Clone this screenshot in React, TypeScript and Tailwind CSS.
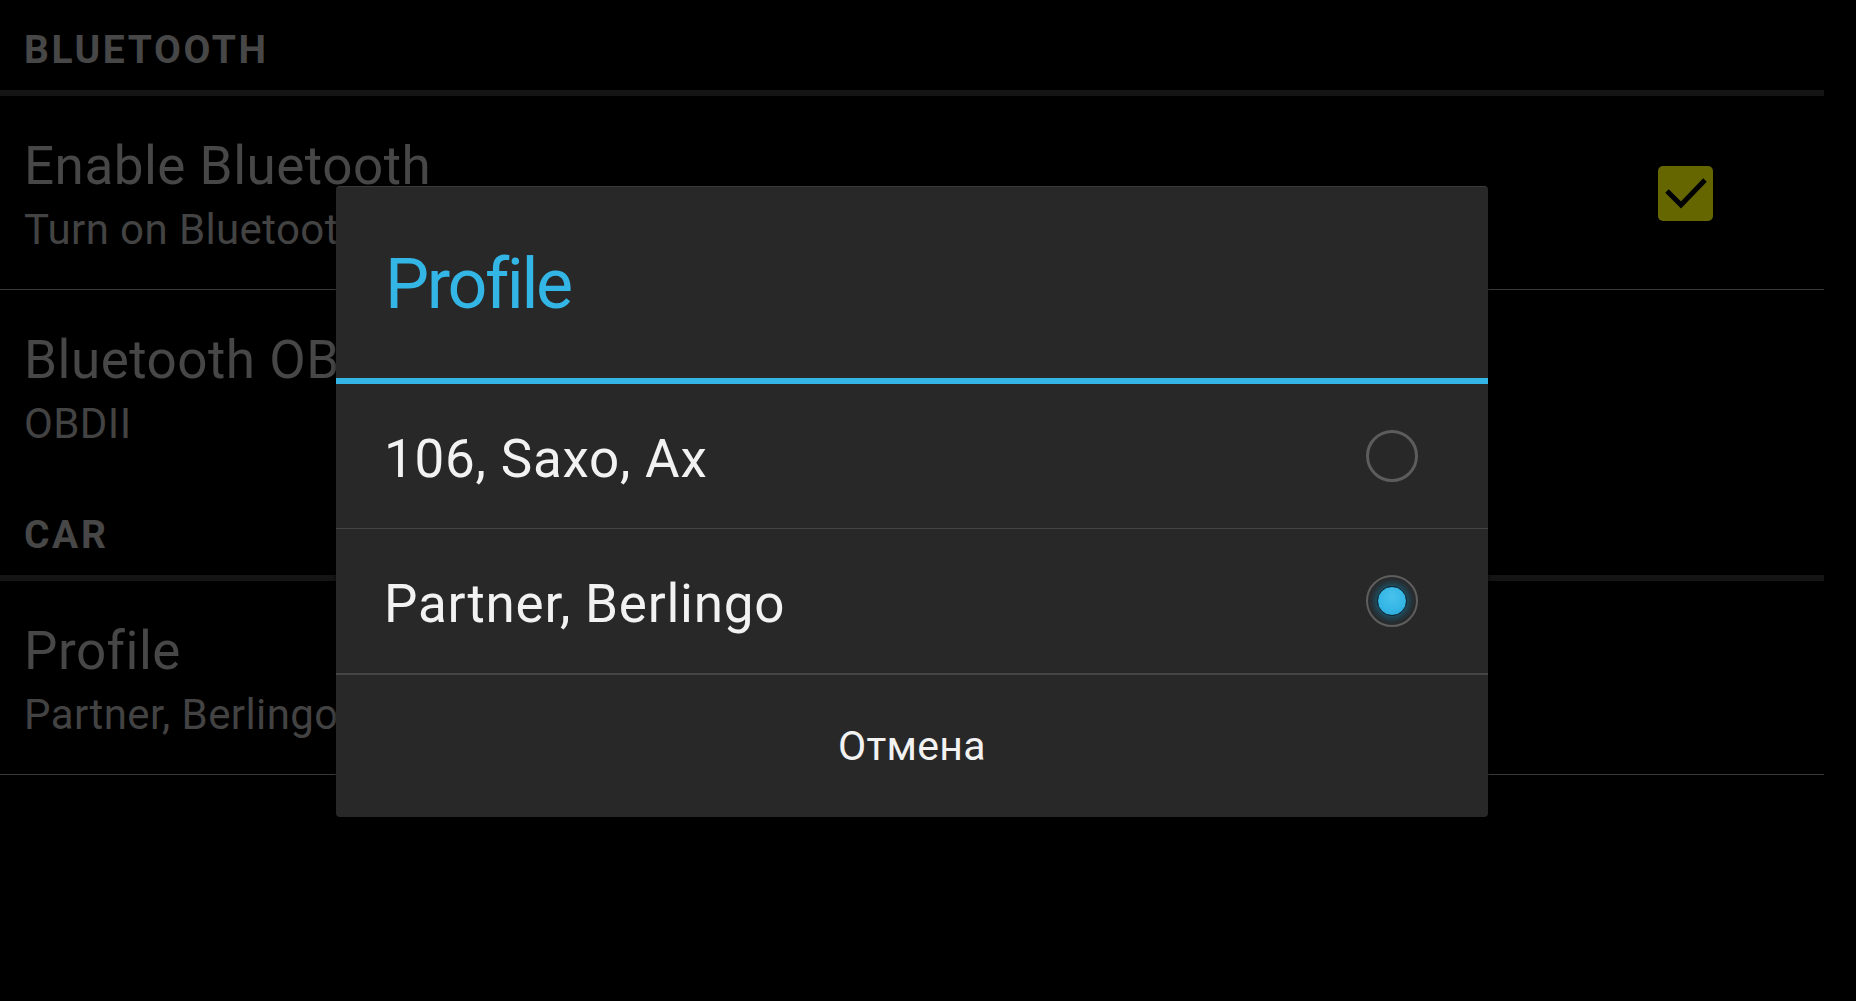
import React from 'react';

const font = { fontFamily: 'Roboto, "Noto Sans", sans-serif' };

function Header({ label }: { label: string }) {
  return (
    <div>
      <div className="pl-[24px] pt-[31px] pb-[20px] text-[39px] leading-[39px] font-bold tracking-[2.6px] text-[#474747]">
        {label}
      </div>
      <div className="h-[6px] bg-[#151515]" />
    </div>
  );
}

function PrefRow({
  title,
  summary,
  checked,
  divider = true,
  bottom = 38,
}: {
  title: string;
  summary: string;
  checked?: boolean;
  divider?: boolean;
  bottom?: number;
}) {
  return (
    <div className={divider ? 'border-b border-[#3a3a3a]' : ''}>
      <div
        className="flex items-center pl-[24px] pt-[44px]"
        style={{ paddingBottom: bottom }}
      >
        <div className="flex-1">
          <div className="text-[53px] leading-[53px] tracking-[0.5px] text-[#474747]">{title}</div>
          <div className="mt-[16px] text-[42px] leading-[42px] tracking-[0.4px] text-[#434343]">{summary}</div>
        </div>
        {checked && (
          <div className="mr-[111px] mt-[-4px] flex h-[55px] w-[55px] items-center justify-center rounded-[5px] bg-[#666600]">
            <svg width="55" height="55" viewBox="0 0 55 55">
              <polyline
                points="9,25 23,39 47,14"
                fill="none"
                stroke="#000"
                strokeWidth="5"
              />
            </svg>
          </div>
        )}
      </div>
    </div>
  );
}

function Radio({ selected }: { selected?: boolean }) {
  return (
    <div className="relative flex h-[52px] w-[52px] items-center justify-center rounded-full border-2 border-[#5e5e5e] bg-[radial-gradient(circle,#16475a_0%,#1e3540_45%,#2a2a2a_70%)]">
      {selected ? (
        <div className="h-[30px] w-[30px] rounded-full border border-[#0c2833] bg-[radial-gradient(circle_at_50%_35%,#49c2ee_0%,#33b5e5_60%,#2ba4d1_100%)] shadow-[0_0_6px_2px_rgba(51,181,229,0.25)]" />
      ) : null}
    </div>
  );
}

function EmptyRadio() {
  return <div className="h-[52px] w-[52px] rounded-full border-[3px] border-[#5c5c5c]" />;
}

function Option({ label, selected, last }: { label: string; selected?: boolean; last?: boolean }) {
  return (
    <div
      className={
        'flex h-[145px] items-center pl-[48px] pr-[70px] ' +
        (last ? 'h-[146px] border-b-2 border-[#454545]' : 'border-b border-[#444444]')
      }
    >
      <div className="flex-1 pt-[6px] text-[53px] leading-[53px] tracking-[0.75px] text-[#f2f2f2]">{label}</div>
      {selected ? <Radio selected /> : <EmptyRadio />}
    </div>
  );
}

export default function App() {
  return (
    <div className="relative h-[1001px] w-[1856px] overflow-hidden bg-black" style={font}>
      <div className="w-[1824px]">
        <Header label="BLUETOOTH" />
        <PrefRow title="Enable Bluetooth" summary="Turn on Bluetooth" checked />
        <PrefRow title="Bluetooth OBDII" summary="OBDII" divider={false} />
        <div className="pt-[2px]" />
        <Header label="CAR" />
        <PrefRow title="Profile" summary="Partner, Berlingo" />
      </div>

      <div className="absolute left-[336px] top-[186px] flex h-[631px] w-[1152px] flex-col overflow-hidden rounded-[4px] border-t border-[#3a3a3a] bg-[#282828] shadow-[0_2px_4px_rgba(0,0,0,0.6)]">
        <div className="pl-[49px] pt-[62px] pb-[59px] text-[70px] leading-[70px] tracking-[-2.4px] text-[#33b5e5]">
          Profile
        </div>
        <div className="h-[6px] bg-[#33b5e5]" />
        <Option label="106, Saxo, Ax" />
        <Option label="Partner, Berlingo" selected last />
        <div className="flex flex-1 items-center justify-center text-[41px] leading-[41px] tracking-[0.3px] text-[#f2f2f2]">
          Отмена
        </div>
      </div>
    </div>
  );
}
